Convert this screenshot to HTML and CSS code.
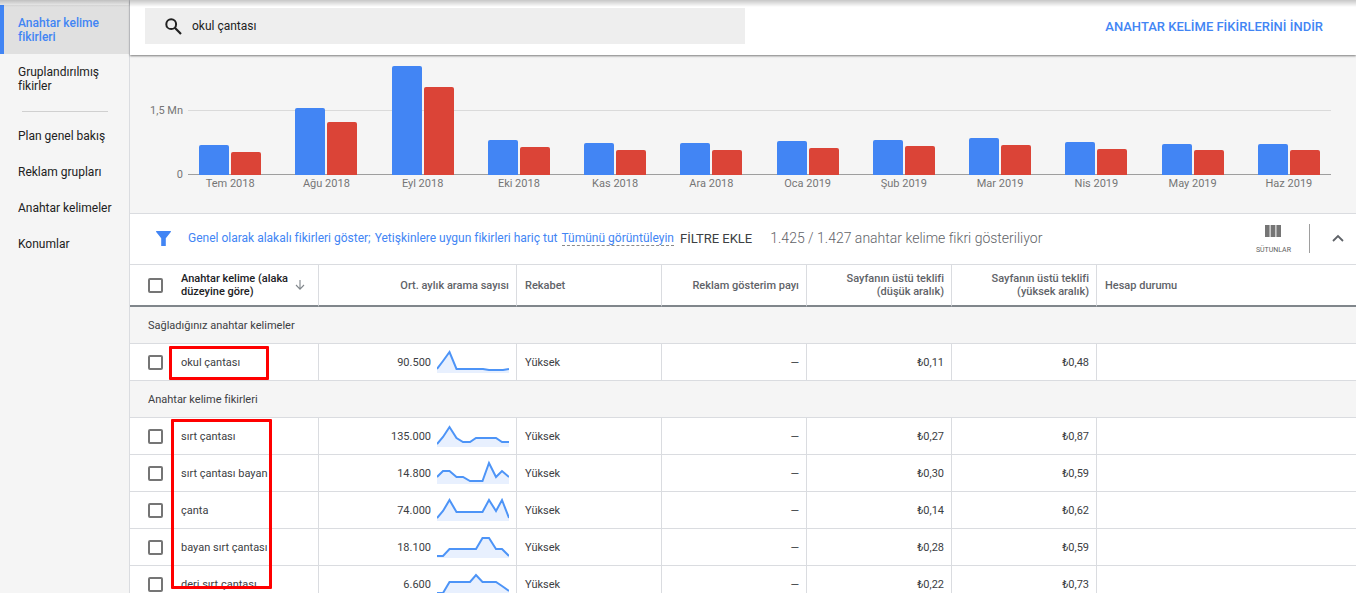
FILE: index.html
```html
<!DOCTYPE html>
<html lang="tr">
<head>
<meta charset="utf-8">
<title>Anahtar kelime fikirleri</title>
<link rel="stylesheet" href="styles.css">
</head>
<body>
<div class="app">
  <nav class="sidebar">
    <a class="nav-item nav-item--active" href="#">Anahtar kelime fikirleri</a>
    <a class="nav-item nav-item--tall" href="#">Gruplandırılmış fikirler</a>
    <hr class="nav-divider">
    <a class="nav-item" href="#">Plan genel bakış</a>
    <a class="nav-item" href="#">Reklam grupları</a>
    <a class="nav-item" href="#">Anahtar kelimeler</a>
    <a class="nav-item" href="#">Konumlar</a>
  </nav>
  <main class="main">
    <header class="topbar">
      <label class="search">
        <svg class="search-icon" viewBox="0 0 17 17"><circle cx="6.2" cy="6.2" r="4.9" fill="none" stroke="currentColor" stroke-width="2"/><path d="M9.8 9.8L16 16" stroke="currentColor" stroke-width="2.2"/></svg>
        <input class="search-input" type="text" value="okul çantası" aria-label="Anahtar kelime ara">
      </label>
      <a class="download" href="#">ANAHTAR KELİME FİKİRLERİNİ İNDİR</a>
    </header>

    <section class="chart">
      <div class="axis"><span>1,5 Mn</span><span>0</span></div>
      <div class="plot">
        <div class="bars">
          <div class="month"><i class="bar" style="height:30px"></i><i class="bar bar--red" style="height:23px"></i></div>
          <div class="month"><i class="bar" style="height:67px"></i><i class="bar bar--red" style="height:53px"></i></div>
          <div class="month"><i class="bar" style="height:109px"></i><i class="bar bar--red" style="height:88px"></i></div>
          <div class="month"><i class="bar" style="height:35px"></i><i class="bar bar--red" style="height:28px"></i></div>
          <div class="month"><i class="bar" style="height:32px"></i><i class="bar bar--red" style="height:25px"></i></div>
          <div class="month"><i class="bar" style="height:32px"></i><i class="bar bar--red" style="height:25px"></i></div>
          <div class="month"><i class="bar" style="height:34px"></i><i class="bar bar--red" style="height:27px"></i></div>
          <div class="month"><i class="bar" style="height:35px"></i><i class="bar bar--red" style="height:29px"></i></div>
          <div class="month"><i class="bar" style="height:37px"></i><i class="bar bar--red" style="height:30px"></i></div>
          <div class="month"><i class="bar" style="height:33px"></i><i class="bar bar--red" style="height:26px"></i></div>
          <div class="month"><i class="bar" style="height:31px"></i><i class="bar bar--red" style="height:25px"></i></div>
          <div class="month"><i class="bar" style="height:31px"></i><i class="bar bar--red" style="height:25px"></i></div>
        </div>
        <div class="months">
          <span>Tem 2018</span><span>Ağu 2018</span><span>Eyl 2018</span><span>Eki 2018</span><span>Kas 2018</span><span>Ara 2018</span><span>Oca 2019</span><span>Şub 2019</span><span>Mar 2019</span><span>Nis 2019</span><span>May 2019</span><span>Haz 2019</span>
        </div>
      </div>
    </section>

    <section class="filters">
      <svg class="funnel" viewBox="0 0 15 15"><path d="M0.6 0H14.4Q15.4 0.2 14.8 1.1L9.8 7.2V15H5.2V7.2L0.2 1.1Q-0.4 0.2 0.6 0Z" fill="currentColor"/></svg>
      <a class="filter-link" href="#">Genel olarak alakalı fikirleri göster;</a>
      <a class="filter-link" href="#">Yetişkinlere uygun fikirleri hariç tut</a>
      <a class="filter-link filter-link--all" href="#">Tümünü görüntüleyin</a>
      <button class="add-filter" type="button">FİLTRE EKLE</button>
      <span class="count">1.425 / 1.427 anahtar kelime fikri gösteriliyor</span>
      <button class="columns" type="button">
        <svg class="columns-icon" viewBox="0 0 16 12"><path d="M0 0H4.6V12H0ZM5.6 0H10.4V12H5.6ZM11.4 0H16V12H11.4Z" fill="currentColor"/></svg>
        <span>SÜTUNLAR</span>
      </button>
      <button class="collapse" type="button" aria-label="Daralt">
        <svg class="chevron" viewBox="0 0 12 8"><path d="M1 7L6 2L11 7" fill="none" stroke="currentColor" stroke-width="1.8"/></svg>
      </button>
    </section>

    <div class="table-wrap">
      <table class="keywords">
        <colgroup><col class="c-check"><col class="c-name"><col class="c-volume"><col class="c-std"><col class="c-std"><col class="c-std"><col class="c-std"><col></colgroup>
        <thead>
          <tr>
            <th class="check"><input type="checkbox" aria-label="Tümünü seç"></th>
            <th class="name"><div class="sort"><span>Anahtar kelime (alaka düzeyine göre)</span><svg class="arrow" viewBox="0 0 10 10"><path d="M5 0V9M1 5L5 9.2L9 5" fill="none" stroke="currentColor" stroke-width="1.1"/></svg></div></th>
            <th class="num">Ort. aylık arama sayısı</th>
            <th>Rekabet</th>
            <th class="num">Reklam gösterim payı</th>
            <th class="num">Sayfanın üstü teklifi (düşük aralık)</th>
            <th class="num">Sayfanın üstü teklifi (yüksek aralık)</th>
            <th>Hesap durumu</th>
          </tr>
        </thead>
        <tbody>
          <tr class="group"><td colspan="8">Sağladığınız anahtar kelimeler</td></tr>
          <tr>
            <td class="check"><input type="checkbox" aria-label="okul çantası"></td><td class="name">okul çantası</td>
            <td class="num"><div class="volume"><span>90.500</span><svg class="spark" viewBox="0 0 72 28"><path class="area" d="M0 21L6 13L12.5 4L19.5 21H46L52 22H66L72 21V25H0Z"/><path class="line" d="M0 21L6 13L12.5 4L19.5 21H46L52 22H66L72 21"/></svg></div></td>
            <td>Yüksek</td><td class="num">—</td><td class="num">₺0,11</td><td class="num">₺0,48</td><td></td>
          </tr>
          <tr class="group"><td colspan="8">Anahtar kelime fikirleri</td></tr>
          <tr>
            <td class="check"><input type="checkbox" aria-label="sırt çantası"></td><td class="name">sırt çantası</td>
            <td class="num"><div class="volume"><span>135.000</span><svg class="spark" viewBox="0 0 72 28"><path class="area" d="M0 22L6 15L12.5 5L19.5 16L26 20H33L39 16H59L65 20H72V25H0Z"/><path class="line" d="M0 22L6 15L12.5 5L19.5 16L26 20H33L39 16H59L65 20H72"/></svg></div></td>
            <td>Yüksek</td><td class="num">—</td><td class="num">₺0,27</td><td class="num">₺0,87</td><td></td>
          </tr>
          <tr>
            <td class="check"><input type="checkbox" aria-label="sırt çantası bayan"></td><td class="name">sırt çantası bayan</td>
            <td class="num"><div class="volume"><span>14.800</span><svg class="spark" viewBox="0 0 72 28"><path class="area" d="M0 18L6 12H12.5L19.5 18H26L33 22H45.5L52 4L59 18L65 12L72 18V25H0Z"/><path class="line" d="M0 18L6 12H12.5L19.5 18H26L33 22H45.5L52 4L59 18L65 12L72 18"/></svg></div></td>
            <td>Yüksek</td><td class="num">—</td><td class="num">₺0,30</td><td class="num">₺0,59</td><td></td>
          </tr>
          <tr>
            <td class="check"><input type="checkbox" aria-label="çanta"></td><td class="name">çanta</td>
            <td class="num"><div class="volume"><span>74.000</span><svg class="spark" viewBox="0 0 72 28"><path class="area" d="M0 22L6 15L12.5 4L19.5 16H45.5L52 4L59 15L65 4L72 22V25H0Z"/><path class="line" d="M0 22L6 15L12.5 4L19.5 16H45.5L52 4L59 15L65 4L72 22"/></svg></div></td>
            <td>Yüksek</td><td class="num">—</td><td class="num">₺0,14</td><td class="num">₺0,62</td><td></td>
          </tr>
          <tr>
            <td class="check"><input type="checkbox" aria-label="bayan sırt çantası"></td><td class="name">bayan sırt çantası</td>
            <td class="num"><div class="volume"><span>18.100</span><svg class="spark" viewBox="0 0 72 28"><path class="area" d="M0 23H6L12.5 16H39L45.5 5H52L59 16H65L72 23V25H0Z"/><path class="line" d="M0 23H6L12.5 16H39L45.5 5H52L59 16H65L72 23"/></svg></div></td>
            <td>Yüksek</td><td class="num">—</td><td class="num">₺0,28</td><td class="num">₺0,59</td><td></td>
          </tr>
          <tr>
            <td class="check"><input type="checkbox" aria-label="deri sırt çantası"></td><td class="name">deri sırt çantası</td>
            <td class="num"><div class="volume"><span>6.600</span><svg class="spark" viewBox="0 0 72 28"><path class="area" d="M0 23H6L12.5 12H33L39 5L45.5 12H59L65 16L72 21V25H0Z"/><path class="line" d="M0 23H6L12.5 12H33L39 5L45.5 12H59L65 16L72 21"/></svg></div></td>
            <td>Yüksek</td><td class="num">—</td><td class="num">₺0,22</td><td class="num">₺0,73</td><td></td>
          </tr>
        </tbody>
      </table>
      <div class="mark mark--seed"></div>
      <div class="mark mark--ideas"></div>
    </div>
  </main>
</div>
</body>
</html>
```
FILE: styles.css
```css
* { box-sizing: border-box; }
body {
  margin: 0;
  overflow: hidden;
  font-family: Roboto, "Liberation Sans", sans-serif;
  font-size: 11px;
  color: #3c4043;
  background: #fff;
}
a { text-decoration: none; color: inherit; }
button { border: 0; padding: 0; background: none; font-family: inherit; color: inherit; cursor: pointer; }
svg { display: block; flex: none; }

.app { position: relative; display: flex; height: 100vh; overflow: hidden; }
.app::before {
  content: "";
  position: absolute;
  z-index: 2;
  top: 0;
  left: 0;
  right: 0;
  height: 7px;
  background: linear-gradient(rgba(0, 0, 0, .22), rgba(0, 0, 0, 0));
}

/* Sidebar */
.sidebar {
  flex: none;
  width: 130px;
  padding-top: 5px;
  background: #f5f5f5;
  border-right: 1px solid #dadce0;
}
.nav-item {
  display: block;
  padding: 11px 18px;
  font-size: 12px;
  line-height: 14px;
  white-space: nowrap;
  color: #212121;
}
.nav-item--active {
  padding: 11px 14px 10px;
  border-left: 4px solid #4285f4;
  background: #e0e0e0;
  color: #4285f4;
  font-weight: 500;
  white-space: normal;
}
.nav-item--tall { padding-bottom: 10px; white-space: normal; }
.nav-divider { height: 1px; margin: 8px 21px 6px 22px; border: 0; background: #d0d0d0; }

/* Top bar */
.main { flex: 1; min-width: 0; }
.topbar {
  position: relative;
  display: flex;
  align-items: center;
  justify-content: space-between;
  padding: 8px 33px 11px 15px;
  box-shadow: 0 1px 2px rgba(0, 0, 0, .5);
}
.search {
  flex: 0 1 600px;
  display: flex;
  align-items: center;
  gap: 10px;
  height: 36px;
  padding: 0 20px;
  background: #eee;
  color: #212121;
}
.search-icon { width: 17px; height: 17px; }
.search-input {
  flex: 1;
  min-width: 0;
  padding: 0;
  border: 0;
  outline: 0;
  background: transparent;
  font: 12px Roboto, sans-serif;
  color: #212121;
}
.download { font-size: 13px; font-weight: 500; color: #4285f4; white-space: nowrap; }

/* Chart */
.chart {
  display: flex;
  gap: 5px;
  padding: 11px 25px 22px 0;
  background: #f5f5f5;
  border-bottom: 1px solid #dadce0;
  color: #757575;
}
.axis {
  width: 53px;
  height: 116px;
  display: flex;
  flex-direction: column;
  justify-content: flex-end;
  gap: 50px;
  line-height: 14px;
  text-align: right;
}
.plot { flex: 1; min-width: 0; }
.bars {
  display: grid;
  grid-template-columns: repeat(12, 1fr);
  height: 109px;
  margin: 0 -6px;
  background:
    linear-gradient(#9e9e9e, #9e9e9e) center bottom / calc(100% - 12px) 1px no-repeat,
    linear-gradient(#dadada, #dadada) center 44px / calc(100% - 12px) 1px no-repeat;
}
.month { display: flex; justify-content: center; align-items: flex-end; gap: 2px; }
.bar { width: 30px; border-radius: 2px 2px 0 0; background: #4285f4; }
.bar--red { background: #db4437; }
.months {
  display: grid;
  grid-template-columns: repeat(12, 1fr);
  margin: 1px -6px 0;
  line-height: 15px;
  text-align: center;
}

/* Filter row */
.filters {
  display: flex;
  align-items: center;
  height: 50px;
  padding: 0 12px 2px 26px;
  white-space: nowrap;
}
.funnel { width: 15px; height: 15px; margin-right: 17px; color: #4285f4; }
.filter-link { margin-right: 4px; font-size: 12px; line-height: 14px; color: #4285f4; }
.filter-link--all { margin-right: 6px; border-bottom: 1px dashed #8a8a8a; }
.add-filter { font-size: 13px; color: #3c4043; }
.count { margin-left: 18px; font-size: 14px; font-weight: 300; color: #5f6368; }
.columns {
  margin-left: auto;
  height: 29px;
  padding-right: 18px;
  border-right: 1px solid #9e9e9e;
  display: flex;
  flex-direction: column;
  align-items: center;
  gap: 9px;
  padding-top: 1px;
  font-size: 7px;
  line-height: 8px;
  color: #616161;
}
.columns-icon { width: 16px; height: 12px; color: #757575; }
.collapse { margin-left: 22px; color: #5f6368; }
.chevron { width: 12px; height: 8px; }

/* Keyword table */
.table-wrap { position: relative; }
.keywords { width: 100%; table-layout: fixed; border-collapse: separate; border-spacing: 0; }
.c-check { width: 41px; }
.c-name { width: 148px; }
.c-volume { width: 198px; }
.c-std { width: 145px; }
.keywords th, .keywords td {
  height: 37px;
  padding: 0 8px;
  border-right: 1px solid #dadce0;
  border-bottom: 1px solid #dadce0;
  text-align: left;
  white-space: nowrap;
}
.keywords th:last-child, .keywords td:last-child, .keywords .check { border-right: 0; }
.keywords th {
  height: 43px;
  border-top: 1px solid #dadce0;
  border-bottom: 2px solid #80868b;
  font-weight: 500;
  line-height: 13px;
  white-space: normal;
  color: #5f6368;
}
.keywords .check { padding: 0 0 0 18px; }
.keywords .name { padding-left: 10px; }
.keywords .num { padding-left: 24px; padding-right: 7px; text-align: right; }
.keywords .group td { padding-left: 18px; background: #f5f5f5; }
.check input {
  appearance: none;
  display: block;
  width: 15px;
  height: 15px;
  margin: 0;
  border: 2px solid #757575;
  border-radius: 2px;
  background: #fff;
}
.sort { display: flex; align-items: center; gap: 4px; color: #202124; }
.sort span { width: 110px; }
.arrow { width: 10px; height: 10px; color: #80868b; }
.volume { display: flex; justify-content: flex-end; align-items: center; gap: 6px; }
.spark { width: 72px; height: 28px; }
.area { fill: #e8f0fe; }
.line { fill: none; stroke: #4d94f7; stroke-width: 2; }

/* Highlight frames over the keyword column */
.mark { position: absolute; border: 3px solid #f00; border-radius: 1px; pointer-events: none; }
.mark--seed { left: 39px; top: 82px; width: 100px; height: 34px; }
.mark--ideas { left: 41px; top: 155px; width: 101px; height: 170px; }
```
